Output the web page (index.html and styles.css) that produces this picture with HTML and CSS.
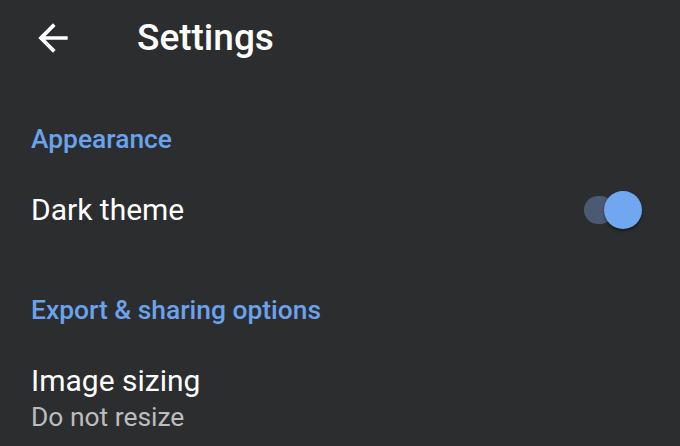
FILE: index.html
```html
<!DOCTYPE html>
<html lang="en">
<head>
  <meta charset="UTF-8">
  <meta name="viewport" content="width=device-width, initial-scale=1.0">
  <title>Settings</title>
  <link rel="stylesheet" href="styles.css">
</head>
<body>
  <div class="toolbar">
    <button class="back-btn" aria-label="Back">
      <svg viewBox="0 0 24 24" width="44" height="44"><path d="M20 11H7.83l5.59-5.59L12 4l-8 8 8 8 1.41-1.41L7.83 13H20v-2z" fill="#fff"/></svg>
    </button>
    <h1 class="title">Settings</h1>
  </div>

  <div class="prefs">
    <div class="category">Appearance</div>
    <div class="pref-row">
      <div class="pref-text">
        <div class="pref-title">Dark theme</div>
      </div>
      <div class="switch on">
        <div class="track"></div>
        <div class="thumb"></div>
      </div>
    </div>

    <div class="category">Export &amp; sharing options</div>
    <div class="pref-row">
      <div class="pref-text">
        <div class="pref-title">Image sizing</div>
        <div class="pref-summary">Do not resize</div>
      </div>
    </div>
  </div>
</body>
</html>
```

FILE: styles.css
```css
* { margin: 0; padding: 0; box-sizing: border-box; }
html, body { width: 100%; height: 100%; background: #2c2d2f; overflow: hidden; font-family: Roboto, "Noto Sans", sans-serif; color: #fff; }

.toolbar { height: 76px; display: flex; align-items: center; }
.back-btn { width: 137px; height: 76px; display: flex; align-items: center; padding-left: 31px; background: none; border: none; }
.back-btn svg { display: block; }
.title { font-size: 37px; font-weight: 500; margin-top: -2px; }

.prefs { padding: 0 38px 0 31px; }
.category { color: #6ba2ec; font-size: 26.4px; font-weight: 500; padding-top: 45px; line-height: 36px; }
.pref-row { display: flex; align-items: center; justify-content: space-between; padding: 34px 0 18px; }
.pref-title { font-size: 30px; line-height: 38px; }
.pref-summary { font-size: 26.4px; line-height: 34px; color: #bdbdbd; }

.switch { position: relative; width: 60px; height: 38px; }
.switch .track { position: absolute; left: 2px; top: 5px; width: 30px; height: 28px; border-radius: 14px; background: #4b5a72; }
.switch .thumb { position: absolute; right: 0; top: 0; width: 38px; height: 38px; border-radius: 50%; background: #70a7f0; box-shadow: 0 2px 3px rgba(0,0,0,0.45); }
```
